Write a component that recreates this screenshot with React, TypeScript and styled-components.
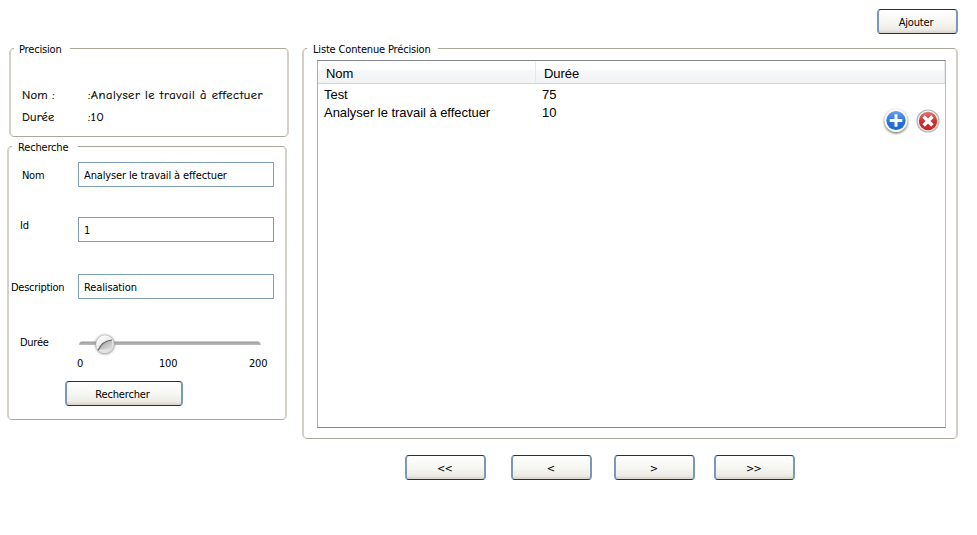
import React from 'react';
import styled, { createGlobalStyle } from 'styled-components';

const GlobalStyle = createGlobalStyle`
  *, *::before, *::after { box-sizing: border-box; }
  body { margin: 0; background: #fff; color: #000; font: 11px/14px Tahoma, "DejaVu Sans Condensed", "DejaVu Sans", sans-serif; }
  button, input { font: inherit; color: inherit; letter-spacing: inherit; }
`;

const Page = styled.div`
  width: 977px;
  height: 535px;
  overflow: hidden;
  letter-spacing: -0.17px;
`;

const TopBar = styled.header`
  display: flex;
  justify-content: flex-end;
  height: 48px;
  padding: 9px 19px 0 0;
`;

const XpButton = styled.button<{ $width?: number }>`
  display: block;
  width: ${(p) => p.$width ?? 81}px;
  height: 25px;
  padding: 2px 3px 0 0;
  border: 1px solid #003c74;
  border-left: 2px solid #7a98b8;
  border-right: 2px solid #7a98b8;
  border-radius: 4px;
  background: linear-gradient(#fff 0%, #f5f5f1 55%, #edece6 84%, #d8d2c7 100%) padding-box;
  line-height: 21px;
  text-align: center;
`;

const Main = styled.main`
  display: flex;
  align-items: flex-start;
`;

const Sidebar = styled.aside`
  display: flex;
  flex-direction: column;
  gap: 9px;
  width: 302px;
  padding-left: 7px;
`;

const Group = styled.section<{ $width: number; $height: number; $indent?: number }>`
  width: ${(p) => p.$width}px;
  height: ${(p) => p.$height}px;
  margin-left: ${(p) => p.$indent ?? 0}px;
  border: 1px solid #aca899;
  border-left: 2px solid #d4d0c8;
  border-right: 2px solid #d4d0c8;
  border-radius: 5px;
`;

const GroupTitle = styled.h2<{ $width: number; $inset: number }>`
  width: ${(p) => p.$width}px;
  height: 14px;
  margin: -7px 0 0 3px;
  padding-left: ${(p) => p.$inset}px;
  background: #fff;
  font-size: 11px;
  font-weight: 400;
  line-height: 15px;
  white-space: nowrap;
`;

const Details = styled.dl`
  display: grid;
  grid-template-columns: 66px 1fr;
  grid-auto-rows: 22px;
  margin: 28px 0 0;
  padding-left: 11px;
  font: 12.5px/23px "Comic Sans MS", "Comic Neue", "Open Sans", sans-serif;
  -webkit-text-stroke: 0.2px #000;
`;

const Term = styled.dt`
  letter-spacing: 0.2px;
  white-space: nowrap;
`;

const Value = styled.dd`
  margin: 0;
  letter-spacing: 0.53px;
  white-space: nowrap;
`;

const Form = styled.form`
  padding-top: 8px;
`;

const FieldRow = styled.div<{ $gap: number }>`
  display: flex;
  align-items: flex-start;
  height: 25px;
  margin-bottom: ${(p) => p.$gap}px;
`;

const FieldLabel = styled.label<{ $indent: number; $top?: number }>`
  flex: 0 0 69px;
  padding: ${(p) => p.$top ?? 7}px 0 0 ${(p) => p.$indent}px;
  letter-spacing: -0.28px;
  white-space: nowrap;
`;

const TextField = styled.input`
  width: 196px;
  height: 25px;
  padding: 1px 5px 0;
  border: 1px solid #7f9db9;
  border-radius: 0;
  background: #fff;
  letter-spacing: -0.13px;
  outline: none;
`;

const Slider = styled.div`
  width: 190px;
  margin: -1px 0 0 -1px;
`;

const SliderTicks = styled.div`
  display: grid;
  grid-template-columns: 82px 90px 18px;
  width: 190px;
  margin-top: 1px;
`;

const Submit = styled.div`
  padding-left: 56px;
`;

const ListTable = styled.div`
  width: 629px;
  height: 368px;
  margin: 4px 0 0 13px;
  border: 1px solid #828790;
  border-left-color: #abadb3;
  border-right-color: #b8bbc2;
  font: 13px/18px "Liberation Sans", Arial, sans-serif;
  letter-spacing: -0.04px;
`;

const HeaderRow = styled.div`
  display: grid;
  grid-template-columns: 218px 1fr;
  height: 23px;
  border-bottom: 1px solid #d5d5d5;
  background: linear-gradient(#fff 0 9px, #f7f8fa 9px, #f1f2f4 100%);
`;

const HeaderCell = styled.div`
  height: 22px;
  padding: 2px 0 0 8px;
  border-right: 1px solid #e3e8ee;
  line-height: 21px;
`;

const DataRow = styled.div`
  display: grid;
  grid-template-columns: 218px 1fr;
  height: 18px;
  line-height: 22px;
`;

const DataCell = styled.div`
  padding-left: 6px;
`;

const RowActions = styled.div`
  display: flex;
  justify-content: flex-end;
  gap: 4px;
  height: 28px;
  margin-top: -13px;
  padding-right: 3px;
`;

const Pager = styled.nav`
  display: grid;
  grid-template-columns: 106px 103px 100px 81px;
  margin: 16px 0 0 405px;
`;

const PagerLabel = styled.span`
  padding-left: 1px;
  letter-spacing: -0.9px;
`;

const AddIcon = () => (
  <svg width="28" height="28" viewBox="0 0 28 28">
    <defs>
      <linearGradient id="blue" x2="0" y2="1">
        <stop stopColor="#6da0e8" />
        <stop offset=".5" stopColor="#2e75dc" />
        <stop offset="1" stopColor="#1764dc" />
      </linearGradient>
      <filter id="shade" x="-20%" y="-20%" width="140%" height="140%">
        <feGaussianBlur stdDeviation="0.8" />
      </filter>
    </defs>
    <circle cx="14" cy="14.7" r="11.8" fill="#777" filter="url(#shade)" />
    <circle cx="14" cy="13.5" r="11.6" fill="#fafafa" />
    <circle cx="14" cy="13.5" r="9.6" fill="url(#blue)" />
    <path d="M14 7.2v12.6M7.7 13.5h12.6" stroke="#fff" strokeWidth="3" />
  </svg>
);

const DeleteIcon = () => (
  <svg width="28" height="28" viewBox="0 0 28 28">
    <defs>
      <linearGradient id="red" x2="0" y2="1">
        <stop stopColor="#dd7777" />
        <stop offset=".5" stopColor="#c93434" />
        <stop offset="1" stopColor="#cf2222" />
      </linearGradient>
    </defs>
    <circle cx="14" cy="14" r="11" fill="#f4f4f4" stroke="#b5b5b5" strokeWidth="1.2" />
    <circle cx="14" cy="14" r="9.2" fill="url(#red)" />
    <path d="m9.6 9.6 8.8 8.8m0-8.8-8.8 8.8" stroke="#fff" strokeWidth="3.5" />
  </svg>
);

const SliderDrawing = () => (
  <svg width="190" height="26" viewBox="-1 0 190 26" display="block">
    <defs>
      <linearGradient id="track" x2="0" y2="1">
        <stop stopColor="#999" />
        <stop offset="1" stopColor="#bdbdbd" />
      </linearGradient>
      <linearGradient id="thumb" x2=".6" y2="1">
        <stop stopColor="#fff" />
        <stop offset="1" stopColor="#ddd" />
      </linearGradient>
      <linearGradient id="gloss" x2="1" y2="1">
        <stop stopColor="#999" />
        <stop offset="1" stopColor="#e4e4e4" />
      </linearGradient>
      <filter id="glow" x="-20%" y="-20%" width="140%" height="140%">
        <feGaussianBlur stdDeviation="0.9" />
      </filter>
    </defs>
    <path d="M1 15q0-3.5 3-3.5h176q2 0 3 3.5z" fill="url(#track)" />
    <circle cx="27" cy="14.5" r="9.8" fill="#999" filter="url(#glow)" />
    <circle cx="27" cy="14.3" r="9" fill="url(#thumb)" />
    <path d="M20.5 20Q25 10.5 34 10.3v8L20.5 20z" fill="url(#gloss)" />
    <path d="M20 20.5Q24 10.8 34 10" fill="none" stroke="#666" strokeWidth="1.2" />
  </svg>
);

const rows = [
  { name: 'Test', duration: '75' },
  { name: 'Analyser le travail à effectuer', duration: '10' },
];

export default function App() {
  return (
    <>
      <GlobalStyle />
      <Page>
        <TopBar>
          <XpButton>Ajouter</XpButton>
        </TopBar>
        <Main>
          <Sidebar>
            <Group $width={280} $height={89} $indent={2}>
              <GroupTitle $width={56} $inset={5}>Precision</GroupTitle>
              <Details>
                <Term>Nom :</Term>
                <Value>:Analyser le travail à effectuer</Value>
                <Term>Durée</Term>
                <Value>:10</Value>
              </Details>
            </Group>
            <Group $width={280} $height={274}>
              <GroupTitle $width={66} $inset={6}>Recherche</GroupTitle>
              <Form onSubmit={(e) => e.preventDefault()}>
                <FieldRow $gap={30}>
                  <FieldLabel $indent={13}>Nom</FieldLabel>
                  <TextField defaultValue="Analyser le travail à effectuer" />
                </FieldRow>
                <FieldRow $gap={32}>
                  <FieldLabel $indent={11} $top={2}>Id</FieldLabel>
                  <TextField defaultValue="1" />
                </FieldRow>
                <FieldRow $gap={32}>
                  <FieldLabel $indent={2}>Description</FieldLabel>
                  <TextField defaultValue="Realisation" />
                </FieldRow>
                <FieldRow $gap={25}>
                  <FieldLabel $indent={11} $top={5}>Durée</FieldLabel>
                  <Slider>
                    <SliderDrawing />
                    <SliderTicks>
                      <span>0</span>
                      <span>100</span>
                      <span>200</span>
                    </SliderTicks>
                  </Slider>
                </FieldRow>
                <Submit>
                  <XpButton $width={118}>Rechercher</XpButton>
                </Submit>
              </Form>
            </Group>
          </Sidebar>
          <Group $width={656} $height={391}>
            <GroupTitle $width={131} $inset={6}>Liste Contenue Précision</GroupTitle>
            <ListTable>
              <HeaderRow>
                <HeaderCell>Nom</HeaderCell>
                <HeaderCell>Durée</HeaderCell>
              </HeaderRow>
              {rows.map((row) => (
                <DataRow key={row.name}>
                  <DataCell>{row.name}</DataCell>
                  <DataCell>{row.duration}</DataCell>
                </DataRow>
              ))}
              <RowActions>
                <AddIcon />
                <DeleteIcon />
              </RowActions>
            </ListTable>
          </Group>
        </Main>
        <Pager>
          {['<<', '<', '>', '>>'].map((label) => (
            <XpButton key={label}>
              <PagerLabel>{label}</PagerLabel>
            </XpButton>
          ))}
        </Pager>
      </Page>
    </>
  );
}
